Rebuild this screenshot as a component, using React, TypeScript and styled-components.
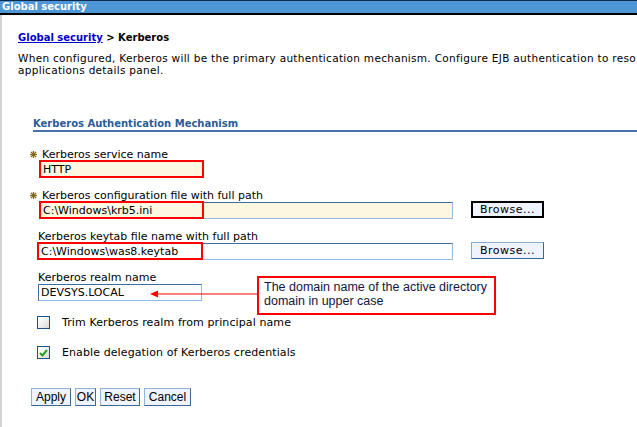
import React from "react";
import styled, { createGlobalStyle } from "styled-components";

const GlobalStyle = createGlobalStyle`
  html, body { margin: 0; padding: 0; background: #fff; }
  body {
    font-family: "DejaVu Sans", Verdana, sans-serif;
    font-size: 11px;
    color: #000;
  }
`;

const Page = styled.div`
  position: relative;
  width: 637px;
  height: 427px;
  overflow: hidden;
  background: #fff;
`;

const TitleBar = styled.div`
  height: 12px;
  line-height: 12px;
  border-top: 1px solid #0d2c4b;
  border-bottom: 2px solid #000;
  background: #4f96d6;
  color: #fff;
  font-weight: bold;
  font-size: 10px;
  padding-left: 2px;
  white-space: nowrap;
`;

const Frame = styled.div`
  border-left: 2px solid #d2d2d2;
  height: 412px;
  padding-left: 16px;
  display: flex;
  flex-direction: column;
  align-items: flex-start;
`;

const Breadcrumb = styled.div`
  margin-top: 16px;
  line-height: 13px;
  font-size: 10px;
  font-weight: bold;
  white-space: nowrap;
`;

const Link = styled.a`
  color: #0000cc;
  text-decoration: underline;
  cursor: pointer;
`;

const Description = styled.div`
  margin-top: 8px;
  line-height: 12px;
  white-space: nowrap;
  font-size: 10.5px;
  letter-spacing: 0.3px;
`;

const Section = styled.div`
  margin-top: 42px;
  margin-left: 15px;
  align-self: stretch;
  display: flex;
  flex-direction: column;
  align-items: flex-start;
`;

const SectionHeader = styled.div`
  align-self: stretch;
  line-height: 12px;
  font-size: 10px;
  font-weight: bold;
  color: #2b5c96;
  border-bottom: 2px solid #4471a8;
  white-space: nowrap;
`;

const Fields = styled.div`
  margin-top: 16px;
  padding-left: 5px;
  display: flex;
  flex-direction: column;
  gap: 11px;
`;

const Field = styled.div<{ $required?: boolean }>`
  display: flex;
  flex-direction: column;
  align-items: flex-start;
  padding-left: ${(p) => (p.$required ? 2 : 0)}px;
`;

const Label = styled.div<{ $required?: boolean }>`
  line-height: 13px;
  height: 13px;
  padding-left: ${(p) => (p.$required ? 2 : 0)}px;
  white-space: nowrap;
`;

const Star = styled.svg`
  display: inline-block;
  width: 7px;
  height: 7px;
  margin-left: -12px;
  margin-right: 5px;
  vertical-align: 0px;
`;

const Row = styled.div`
  display: flex;
  align-items: flex-start;
  gap: 18px;
`;

const InputWrap = styled.div`
  position: relative;
  display: flex;
`;

const TextInput = styled.input<{ $w: number; $req?: boolean }>`
  box-sizing: border-box;
  width: ${(p) => p.$w}px;
  height: 17px;
  margin: 0;
  padding: 0 2px;
  font-family: "DejaVu Sans", Verdana, sans-serif;
  font-size: 11px;
  color: #000;
  background: ${(p) => (p.$req ? "#fdf6e1" : "#ffffff")};
  border-style: solid;
  border-width: 1px;
  border-color: #3f6d9f #93bbdf #93bbdf #3f6d9f;
  outline: none;
`;

const Highlight = styled.div<{ $w: number }>`
  position: absolute;
  left: -1px;
  top: -1px;
  width: ${(p) => p.$w}px;
  height: 18px;
  box-sizing: border-box;
  border: 2px solid #ff0000;
  pointer-events: none;
`;

const BrowseButton = styled.button<{ $focused?: boolean }>`
  box-sizing: border-box;
  width: 73px;
  height: 17px;
  margin: -1px 0 0 0;
  padding: 0;
  font-family: "DejaVu Sans", Verdana, sans-serif;
  font-size: 11px;
  letter-spacing: 0.5px;
  line-height: 13px;
  color: #000;
  background: #eef3fd;
  border-style: solid;
  border-width: ${(p) => (p.$focused ? "2px" : "1px")};
  border-color: ${(p) =>
    p.$focused ? "#000" : "#86acd4 #3b6797 #3b6797 #86acd4"};
`;

const CheckRow = styled.label<{ $first?: boolean }>`
  display: flex;
  align-items: center;
  gap: 12px;
  height: 13px;
  margin-top: ${(p) => (p.$first ? 15 : 17)}px;
  margin-left: 4px;
  white-space: nowrap;
  letter-spacing: 0.1px;
`;

const Box = styled.span`
  box-sizing: border-box;
  width: 13px;
  height: 13px;
  border: 1px solid #1d5283;
  background: linear-gradient(135deg, #ffffff 0%, #f0f0f0 50%, #d8d8d8 100%);
  display: flex;
  align-items: center;
  justify-content: center;
`;

const Buttons = styled.div`
  margin-top: 29px;
  margin-left: -2px;
  display: flex;
  gap: 4px;
`;

const ActionButton = styled.button<{ $w: number }>`
  box-sizing: border-box;
  width: ${(p) => p.$w}px;
  height: 18px;
  margin: 0;
  padding: 0;
  font-family: "Liberation Sans", Arial, sans-serif;
  font-size: 12px;
  line-height: 14px;
  text-align: center;
  color: #000;
  background: #eef3fc;
  border-style: solid;
  border-width: 1px;
  border-color: #8fb3da #3b6797 #3b6797 #8fb3da;
`;

const Callout = styled.div`
  position: absolute;
  left: 257px;
  top: 276px;
  width: 239px;
  height: 39px;
  box-sizing: border-box;
  border: 2px solid #ff0000;
  padding: 2px 0 0 5px;
  font-family: "Liberation Sans", Tahoma, sans-serif;
  font-size: 12.5px;
  line-height: 14px;
  color: #141440;
  background: #fff;
  white-space: nowrap;
`;

const Arrow = styled.svg`
  position: absolute;
  left: 148px;
  top: 289px;
  width: 110px;
  height: 10px;
`;

const RequiredStar = () => (
  <Star viewBox="0 0 7 7">
    <g stroke="#7d6a1c" strokeWidth="1.3" strokeLinecap="square">
      <line x1="3.5" y1="0.5" x2="3.5" y2="6.5" />
      <line x1="0.5" y1="3.5" x2="6.5" y2="3.5" />
      <line x1="1.3" y1="1.3" x2="5.7" y2="5.7" />
      <line x1="5.7" y1="1.3" x2="1.3" y2="5.7" />
    </g>
  </Star>
);

const CheckMark = () => (
  <svg width="9" height="8" viewBox="0 0 9 8">
    <path d="M1 4 L3.5 6.5 L8 1" fill="none" stroke="#23a323" strokeWidth="2" />
  </svg>
);

export default function App() {
  return (
    <Page>
      <GlobalStyle />
      <TitleBar>Global security</TitleBar>
      <Frame>
        <Breadcrumb>
          <Link>Global security</Link> &gt; Kerberos
        </Breadcrumb>
        <Description>
          <div>
            When configured, Kerberos will be the primary authentication mechanism. Configure EJB authentication to reso
          </div>
          <div>applications details panel.</div>
        </Description>
        <Section>
          <SectionHeader>Kerberos Authentication Mechanism</SectionHeader>
          <Fields>
            <Field $required>
              <Label $required>
                <RequiredStar />
                Kerberos service name
              </Label>
              <InputWrap>
                <TextInput $w={163} $req readOnly defaultValue="HTTP" />
                <Highlight $w={165} />
              </InputWrap>
            </Field>
            <Field $required>
              <Label $required>
                <RequiredStar />
                Kerberos configuration file with full path
              </Label>
              <Row>
                <InputWrap>
                  <TextInput $w={413} $req readOnly defaultValue="C:\Windows\krb5.ini" />
                  <Highlight $w={165} />
                </InputWrap>
                <BrowseButton $focused>Browse...</BrowseButton>
              </Row>
            </Field>
            <Field>
              <Label>Kerberos keytab file name with full path</Label>
              <Row>
                <InputWrap>
                  <TextInput $w={415} readOnly defaultValue="C:\Windows\was8.keytab" />
                  <Highlight $w={166} />
                </InputWrap>
                <BrowseButton>Browse...</BrowseButton>
              </Row>
            </Field>
            <Field>
              <Label>Kerberos realm name</Label>
              <InputWrap>
                <TextInput $w={164} readOnly defaultValue="DEVSYS.LOCAL" />
              </InputWrap>
            </Field>
          </Fields>
          <CheckRow $first>
            <Box />
            Trim Kerberos realm from principal name
          </CheckRow>
          <CheckRow>
            <Box>
              <CheckMark />
            </Box>
            Enable delegation of Kerberos credentials
          </CheckRow>
          <Buttons>
            <ActionButton $w={40}>Apply</ActionButton>
            <ActionButton $w={21}>OK</ActionButton>
            <ActionButton $w={40}>Reset</ActionButton>
            <ActionButton $w={47}>Cancel</ActionButton>
          </Buttons>
        </Section>
      </Frame>
      <Arrow viewBox="0 0 110 10">
        <line x1="6" y1="5" x2="110" y2="5" stroke="#ff0000" strokeWidth="1.2" />
        <polygon points="2,5 10,1.5 10,8.5" fill="#ff0000" />
      </Arrow>
      <Callout>
        The domain name of the active directory
        <br />
        domain in upper case
      </Callout>
    </Page>
  );
}
